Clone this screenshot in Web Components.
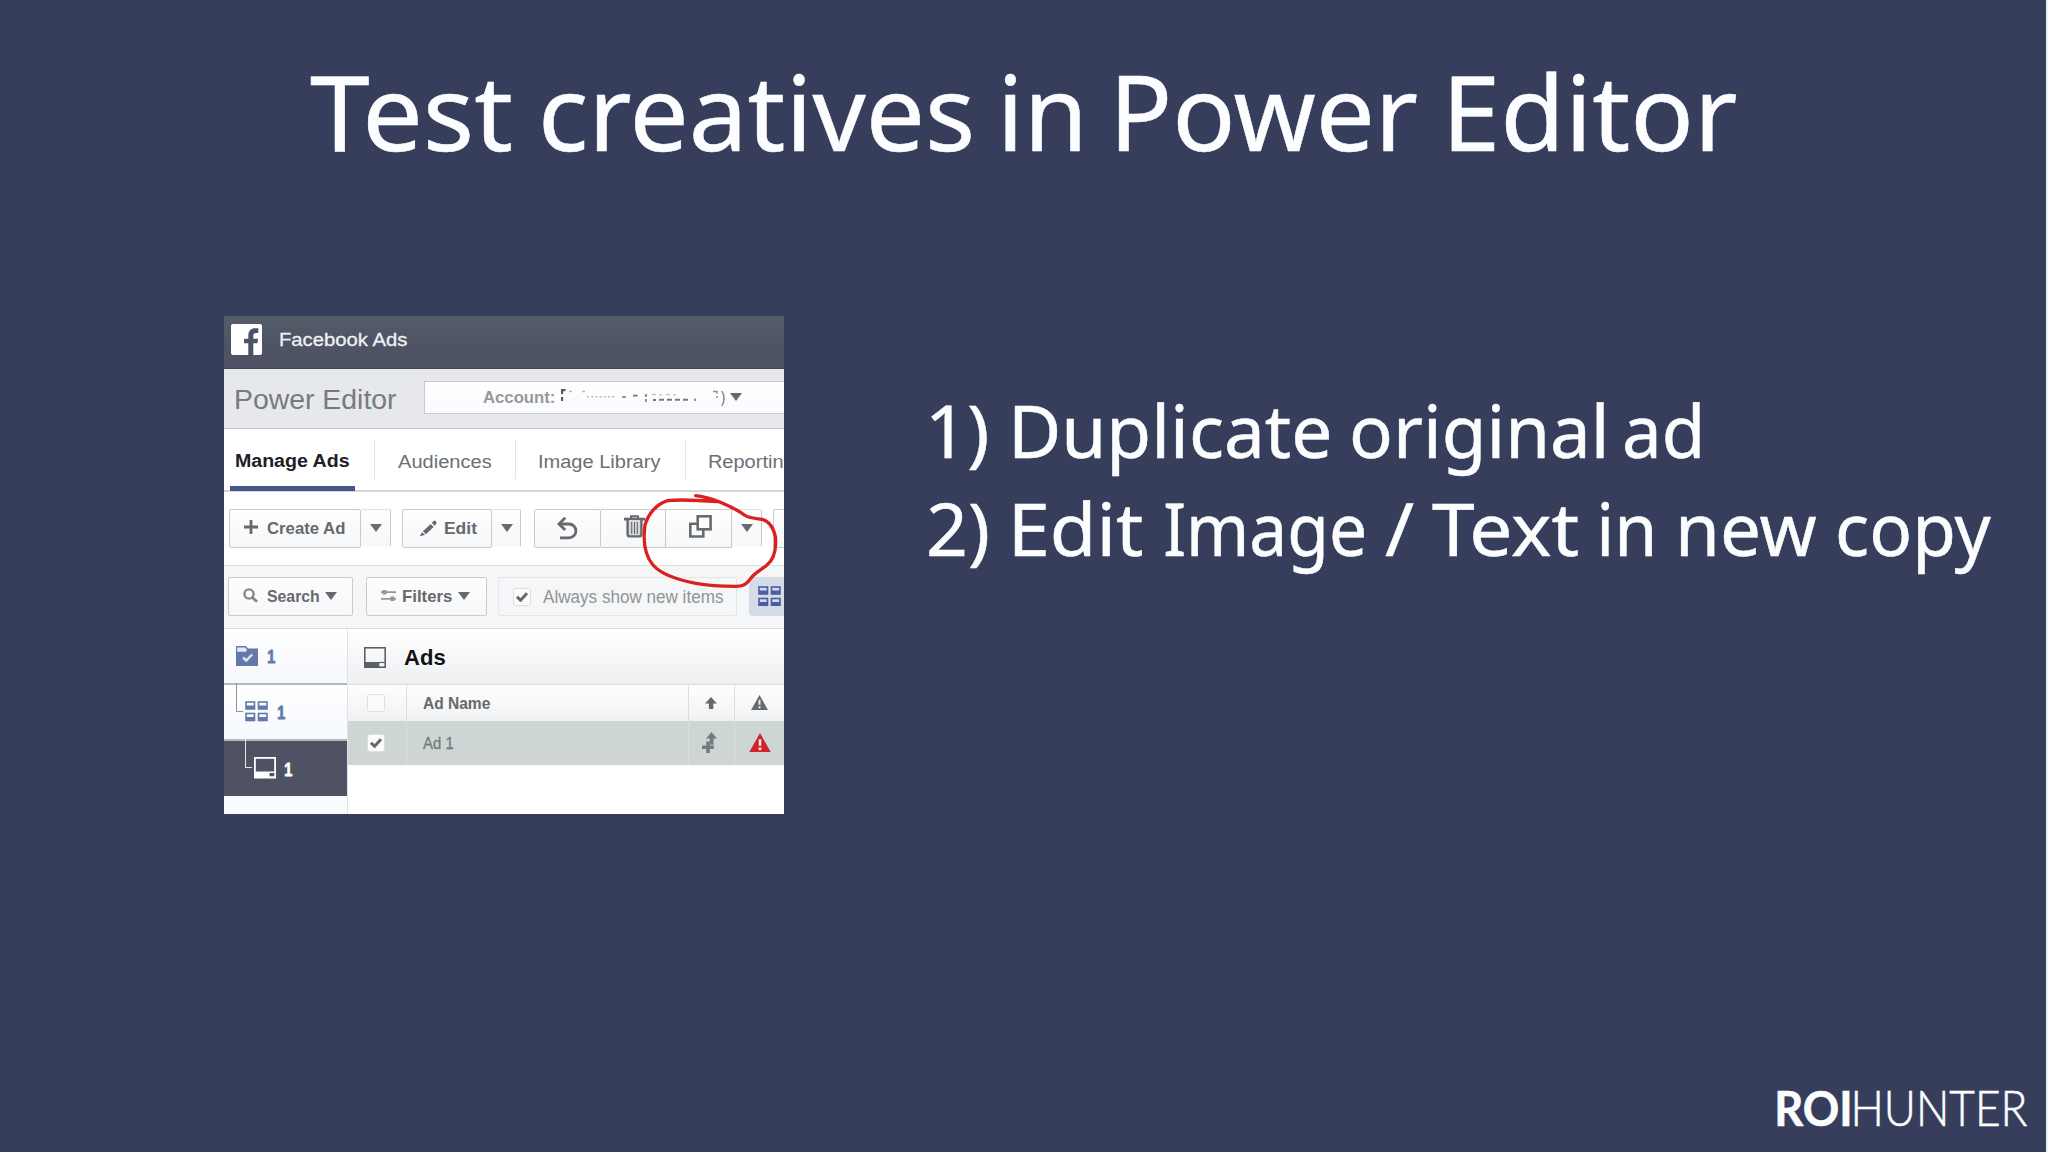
<!DOCTYPE html>
<html lang="en">
<head>
<meta charset="utf-8">
<title>Test creatives in Power Editor</title>
<style>
  body {
    margin: 0;
    background: #373e5c;
    overflow: hidden;
  }
</style>
</head>
<body>
<title-slide>
  <fit-text slot="title" w="200.5">Test</fit-text>
  <fit-text slot="title" w="427.6" style="margin-left:32px">creatives</fit-text>
  <fit-text slot="title" w="74.8" style="margin-left:34px">in</fit-text>
  <fit-text slot="title" w="298.2" style="margin-left:40.1px">Power</fit-text>
  <fit-text slot="title" w="284.6" style="margin-left:34.5px">Editor</fit-text>

  <power-editor slot="figure"></power-editor>

  <slide-step slot="steps">
    <fit-text w="55.4" style="margin-left:2.4px">1)</fit-text>
    <fit-text w="314.3" style="margin-left:28.2px">Duplicate</fit-text>
    <fit-text w="250.8" style="margin-left:23.9px">original</fit-text>
    <fit-text w="74.8" style="margin-left:21.4px">ad</fit-text>
  </slide-step>
  <slide-step slot="steps">
    <fit-text w="58">2)</fit-text>
    <fit-text w="127" style="margin-left:28px">Edit</fit-text>
    <fit-text w="199.3" style="margin-left:23px">Image</fit-text>
    <fit-text w="29" style="margin-left:21px">/</fit-text>
    <fit-text w="145.8" style="margin-left:17.7px">Text</fit-text>
    <fit-text w="51.5" style="margin-left:23.6px">in</fit-text>
    <fit-text w="135.5" style="margin-left:28.1px">new</fit-text>
    <fit-text w="152.6" style="margin-left:22.5px">copy</fit-text>
  </slide-step>

  <roi-logo slot="logo"></roi-logo>
</title-slide>

<script>
class TitleSlide extends HTMLElement {
  constructor() {
    super();
    this.attachShadow({ mode: 'open' });
    this.shadowRoot.innerHTML = `
      <style>
        :host {
          display: flex;
          flex-direction: column;
          box-sizing: border-box;
          width: 2048px;
          height: 1152px;
          background: #373e5c;
          border-right: 2px solid #eef3f8;
          color: #fbfdff;
          font-family: "Noto Sans", "Open Sans", sans-serif;
        }
        .title {
          display: flex;
          height: 74px;
          padding: 75.5px 0 0 310.5px;
          font-size: 103.6px;
          -webkit-text-stroke: .5px;
        }
        .main {
          display: flex;
          flex: 1;
          align-items: flex-start;
          padding: 166px 0 0 223.7px;
        }
        .steps {
          display: flex;
          flex-direction: column;
          gap: 46px;
          margin: 89.5px 0 0 145.3px;
          font-size: 72.8px;
          -webkit-text-stroke: .5px;
        }
        .footer {
          display: flex;
          justify-content: flex-end;
          padding: 0 18.7px 26.3px 0;
        }
      </style>
      <div class="title"><slot name="title"></slot></div>
      <div class="main">
        <slot name="figure"></slot>
        <div class="steps"><slot name="steps"></slot></div>
      </div>
      <div class="footer"><slot name="logo"></slot></div>
    `;
  }
}

class SlideStep extends HTMLElement {
  constructor() {
    super();
    this.attachShadow({ mode: 'open' });
    this.shadowRoot.innerHTML = `
      <style>
        :host { display: flex; height: 52px; }
      </style>
      <slot></slot>
    `;
  }
}

class RoiLogo extends HTMLElement {
  constructor() {
    super();
    this.attachShadow({ mode: 'open' });
    this.shadowRoot.innerHTML = `
      <style>
        :host {
          display: flex;
          gap: 6px;
          font-family: Lato, sans-serif;
          font-size: 48.4px;
          font-weight: 300;
          -webkit-text-stroke: .6px;
        }
        .bold { font-weight: 700; }
      </style>
      <fit-text class="bold" w="72.6">ROI</fit-text>
      <fit-text w="172">HUNTER</fit-text>
    `;
  }
}

// Box as wide as w and as high as a capital; the text is stretched to fill it.
class FitText extends HTMLElement {
  constructor() {
    super();
    this.attachShadow({ mode: 'open' });
  }

  connectedCallback() {
    const cs = getComputedStyle(this);
    const ctx = document.createElement('canvas').getContext('2d');
    ctx.font = `${cs.fontWeight} ${cs.fontSize} ${cs.fontFamily}`;
    const m = ctx.measureText(this.textContent.trim());
    const cap = ctx.measureText('H').actualBoundingBoxAscent;
    const w = Number(this.getAttribute('w'));
    const scale = w / (m.actualBoundingBoxLeft + m.actualBoundingBoxRight);
    const dx = m.actualBoundingBoxLeft * scale;
    const dy = cap / 2 - (m.fontBoundingBoxAscent - m.fontBoundingBoxDescent) / 2;

    this.shadowRoot.innerHTML = `
      <style>
        :host {
          display: block;
          flex: none;
          width: ${w}px;
          height: ${cap}px;
          line-height: ${cap}px;
          white-space: nowrap;
        }
        span {
          display: inline-block;
          vertical-align: top;
          transform-origin: 0 0;
          transform: translate(${dx}px, ${dy}px) scaleX(${scale});
        }
      </style>
      <span><slot></slot></span>
    `;
  }
}

const GRID = `
  <rect x="1" y="1" width="8.5" height="7"/><rect x="13.5" y="1" width="8.5" height="7"/>
  <rect x="1" y="12.5" width="8.5" height="7"/><rect x="13.5" y="12.5" width="8.5" height="7"/>
  <path d="M1 6.3h8.5M13.5 6.3h8.5M1 17.8h8.5M13.5 17.8h8.5" stroke-width="3.4"/>`;

const ICONS = {
  facebook: [31, 31, `<rect width="31" height="31" rx="2" fill="#fff"/>
    <path d="M17.3 31V19.3h-4.2v-4.6h4.2v-3.2c0-5 2.8-7.2 7-7.2h3v4.6h-2.2c-2.1 0-2.8 1-2.8 2.9v2.9h4.8l-.6 4.6h-4.2V31z" fill="#4b5366"/>`],
  caret: [12, 8, '<path d="M0 0h12L6 8z" fill="currentColor"/>'],
  plus: [14, 14, '<path d="M7 0v14M0 7h14" stroke="currentColor" stroke-width="2.8"/>'],
  pencil: [18, 17, `<path d="M3.9 11.2 11.6 3.9l3 3-7.7 7.3z" fill="currentColor"/>
    <path d="m12.7 2.8 1.9-1.9q1-.7 2 .2l.7.8q.7 1-.1 1.8l-1.6 2z" fill="currentColor"/><path d="m3 12.2 3 2.8-5.2 1.3z" fill="currentColor"/>`],
  undo: [21, 23, `<path d="M2 7h10a6.8 6.8 0 0 1 0 13.8H3" fill="none" stroke="currentColor" stroke-width="2.8"/>
    <path d="M8.2.8 2 7l6.2 6" fill="none" stroke="currentColor" stroke-width="2.8"/>`],
  trash: [21, 23, `<path d="M7 3V1.2h7V3" fill="none" stroke="currentColor" stroke-width="2"/><path d="M0 4.1h21" stroke="currentColor" stroke-width="2.8"/>
    <path d="M3.6 5v14.2q0 2.2 2.2 2.2h9.4q2.2 0 2.2-2.2V5" fill="#d7d9db" stroke="currentColor" stroke-width="2.4"/>
    <path d="M7.7 7v12M10.5 7v12M13.3 7v12" stroke="currentColor" stroke-width="1.1"/>`],
  duplicate: [23, 23, `<path d="M8 8.7H1.3v12.8h13V15" fill="none" stroke="currentColor" stroke-width="2.6"/>
    <rect x="8.7" y="1.3" width="12.9" height="13" fill="none" stroke="currentColor" stroke-width="2.6"/>`],
  search: [15, 15, `<circle cx="6" cy="6" r="4.6" fill="none" stroke="currentColor" stroke-width="2.4"/>
    <path d="m9.4 9.4 4.6 4.4" stroke="currentColor" stroke-width="2.8"/>`],
  filters: [15, 13, `<path d="M0 3.2h15M0 9.8h15" stroke="currentColor" stroke-width="1.7"/>
    <path d="M1.5 3.2h4M9.5 9.8h4" stroke="currentColor" stroke-width="4.4"/>`],
  grid: [23, 20.5, `<g fill="none" stroke="currentColor" stroke-width="1.6">${GRID}</g>`],
  folder: [22, 20, `<path d="M0 0h10l2 2.6h10V20H0z" fill="currentColor"/><path d="M1.2 1.4h8l1.8 2.7-1.3 1.6H1.2z" fill="#e4e9f4"/>
    <path d="m7 11.5 3.2 3 6-6" fill="none" stroke="#dfe6f4" stroke-width="2.4"/>`],
  ad: [22, 21, `<rect x=".8" y=".8" width="20.4" height="19.4" fill="none" stroke="currentColor" stroke-width="1.6"/>
    <path d="M.5 15h14.8v5.5H.5z" fill="currentColor"/><path d="M15 15.5h6.5" stroke="currentColor" stroke-width="1.2"/>`],
  'ad-dark': [22, 21.5, `<rect x=".9" y=".9" width="20.2" height="19.7" fill="none" stroke="currentColor" stroke-width="1.8"/>
    <path d="M.5 14.5h21v6.5H.5z" fill="currentColor"/><path d="M15.5 16h4.8v3.2h-4.8z" fill="#4e5262"/>`],
  up: [12, 12, '<path d="M6 0l6 6.5H8.3V12H3.9V6.5H0z" fill="currentColor"/>'],
  'up-plus': [15, 21.5, `<path d="M9.5 0 15 6.5h-3.4v6.2H7.7V6.5H4z" fill="currentColor"/>
    <path d="M6 9.5v11.8M0 15.3h11.8" stroke="currentColor" stroke-width="3.6"/>`],
  warning: [22, 19.5, `<path d="M11 0l11 19.5H0z" fill="currentColor"/>
    <path d="M11 6.3v6.4M11 14.6v2.7" stroke="#f6ecec" stroke-width="2.5"/>`],
  check: [12, 10, '<path d="m1 4.8 3.6 3.5L11 1.2" fill="none" stroke="#66696b" stroke-width="3"/>'],
  // leftovers of the account name that was wiped out
  smudge: [160, 18, `<g fill="none" stroke="#74777a" stroke-width="1.6">
    <path d="M1 13V9M1 6V2.2h3.5" stroke="#55585a" stroke-width="2.2"/>
    <path d="M8 3.5h3M21 3.5h3" opacity=".5"/><path d="M26 8.8h28" stroke-dasharray="2 2.2" opacity=".5"/>
    <path d="M61 9h4M72 7.6h4.5"/><path d="M85 6v3M85 11v3"/>
    <path d="M91 6.5h4M98 7h3M105 6.5h4M112 7h3" opacity=".4"/>
    <path d="M92 12h3M98 11.7h5M106 11.7h5M114 11.7h5M122 11.7h5" stroke-width="2"/><path d="M134 10.5v2.5"/>
    <path d="M152 3.5h4v2M156 8v2" opacity=".8"/></g>`]
};

class UiIcon extends HTMLElement {
  constructor() {
    super();
    this.attachShadow({ mode: 'open' });
  }

  connectedCallback() {
    const [w, h, body] = ICONS[this.getAttribute('name')];
    const width = Number(this.getAttribute('w')) || w;
    this.shadowRoot.innerHTML = `
      <style>
        :host { display: block; flex: none; width: ${width}px; height: ${h * width / w}px; }
        svg { display: block; }
      </style>
      <svg width="${width}" height="${h * width / w}" viewBox="0 0 ${w} ${h}">${body}</svg>
    `;
  }
}

class UiButton extends HTMLElement {
  constructor() {
    super();
    this.attachShadow({ mode: 'open' });
    this.shadowRoot.innerHTML = `
      <style>
        :host {
          display: flex;
          flex: none;
          align-items: center;
          box-sizing: border-box;
          height: 39px;
          border: 1.5px solid #c8cacd;
          border-radius: 2px;
          background: linear-gradient(#fefefe, #f6f7f9);
          color: #66696d;
          font-weight: 700;
        }
        :host([joined]) { border-left: 0; border-radius: 0; }
        :host([drop]) {
          height: 38px;
          justify-content: center;
          border-left: 0;
          border-bottom-color: transparent;
          border-top-color: #dfe1e3;
        }
      </style>
      <slot></slot>
    `;
  }
}

class UiCheckbox extends HTMLElement {
  constructor() {
    super();
    this.attachShadow({ mode: 'open' });
  }

  connectedCallback() {
    this.shadowRoot.innerHTML = `
      <style>
        :host {
          display: flex;
          flex: none;
          align-items: center;
          justify-content: center;
          box-sizing: border-box;
          width: 18px;
          height: 18px;
          border: 1.5px solid #dcdee0;
          border-radius: 3px;
          background: #fbfbfc;
        }
      </style>
      ${this.hasAttribute('checked') ? '<ui-icon name="check"></ui-icon>' : ''}
    `;
  }
}

class TreeItem extends HTMLElement {
  constructor() {
    super();
    this.attachShadow({ mode: 'open' });
  }

  connectedCallback() {
    const level = Number(this.getAttribute('level'));
    this.shadowRoot.innerHTML = `
      <style>
        :host {
          display: flex;
          box-sizing: border-box;
          height: 56px;
          align-items: center;
          padding-left: ${12.8 + level * 8.6}px;
          position: relative;
          color: #6478ab;
          font-size: 17.5px;
          font-weight: 700;
          background: linear-gradient(#fff, #f5f8fc);
          border-bottom: 2px solid #b4b8bf;
        }
        :host([active]) { height: 55px; background: #4e5262; color: #fff; border: 0; }
        .branch {
          position: absolute;
          left: ${4.5 + level * 8.2}px;
          top: -2px;
          width: 6px;
          height: 28px;
          border: solid #8d9299;
          border-width: 0 0 1.5px 1.5px;
        }
        :host([active]) .branch { border-color: #e4e7ea; }
        fit-text { margin: 2px 0 0 9.5px; -webkit-text-stroke: .8px; }
      </style>
      ${level ? '<div class="branch"></div>' : ''}
      <ui-icon name="${this.getAttribute('icon')}"></ui-icon>
      <fit-text w="7.4">1</fit-text>
    `;
  }
}

class PowerEditor extends HTMLElement {
  constructor() {
    super();
    this.attachShadow({ mode: 'open' });
    this.shadowRoot.innerHTML = `
      <style>
        :host {
          display: block;
          flex: none;
          position: relative;
          width: 560px;
          height: 498px;
          overflow: hidden;
          background: #fff;
          color: #6b6f76;
          font-family: "Liberation Sans", Arial, sans-serif;
          font-size: 17px;
        }
        .row { display: flex; align-items: center; box-sizing: border-box; overflow: hidden; }
        .brand {
          height: 53px;
          padding: 0 0 4px 7.5px;
          background: linear-gradient(#535d68, #4f5565 45%, #4f5363);
          border-bottom: 1px solid #434754;
          color: #eef1f5;
          font-size: 19px;
          -webkit-text-stroke: .3px;
        }
        .account-bar { height: 60px; padding-left: 12.8px; background: #e6e8ec; border-bottom: 1.5px solid #c3c6cb; }
        .name { font-size: 27.5px; color: #777b80; }
        .account {
          display: flex;
          flex: none;
          align-items: center;
          box-sizing: border-box;
          width: 380px;
          height: 33px;
          margin: -2px 0 0 27.3px;
          padding-left: 57.5px;
          border: 1.5px solid #c8cbd0;
          background: linear-gradient(#fff, #f9fafc);
          font-size: 16px;
          color: #66696d;
        }
        .tabs { height: 63px; padding-left: 6.5px; border-bottom: 2px solid #d5d6d8; font-size: 18px; overflow: visible; position: relative; }
        .tab-active {
          display: flex;
          align-items: center;
          align-self: flex-end;
          box-sizing: border-box;
          width: 125.3px;
          height: 62px;
          padding: 6px 0 0 6px;
          margin: 0 18.5px -1px 0;
          border-bottom: 5px solid #435589;
          color: #1e2026;
          font-weight: 700;
        }
        .sep { flex: none; width: 1px; height: 39px; background: #e3e5e8; }
        .tools { height: 74px; padding-left: 5.3px; border-bottom: 1.5px solid #dcdee0; }
        .filters { height: 63px; padding: 0 0 1px 4.3px; background: #f5f6f8; border-bottom: 1.5px solid #dadcdf; }
        .always { background: none; border-color: #e3e5e8; font-weight: 400; color: #8f9497; }
        .view { width: 60px; background: #d6dbe8; border-color: #d6dbe8; color: #4a5da0; border-radius: 4px; }
        .body { display: grid; grid-template-columns: 123px 1fr; height: 185px; }
        .tree { background: #fafcff; }
        .list { border-left: 1.5px solid #dfe1e4; }
        .list-title { height: 56px; padding-left: 16.5px; background: linear-gradient(#fff, #eeeff1); border-bottom: 1.5px solid #dcdee0; font-size: 22px; font-weight: 700; color: #111216; }
        .line { display: grid; grid-template-columns: 58px 282px 46px 1fr; }
        .cell { display: flex; align-items: center; border-left: 1.5px solid #dbdddf; box-sizing: border-box; padding-left: 16px; }
        .cell:first-child { border: 0; padding-left: 19px; }
        .head { height: 36px; background: linear-gradient(#fff, #f0f1f3); font-size: 16px; font-weight: 700; color: #66696d; }
        .item { height: 44px; background: #ced6d5; font-size: 16px; color: #737b7c; -webkit-text-stroke: .3px; }
        .item .cell { border-color: #d8dfde; }
        .marker { position: absolute; left: 0; top: 0; }
      </style>

      <div class="row brand">
        <ui-icon name="facebook"></ui-icon>
        <fit-text w="128" style="margin-left:18px">Facebook Ads</fit-text>
      </div>

      <div class="row account-bar">
        <fit-text class="name" w="160.4" style="margin-top:3px">Power Editor</fit-text>
        <div class="account">
          <fit-text w="71" style="font-weight:700;color:#96999b">Account:</fit-text>
          <ui-icon name="smudge" style="margin-left:7px"></ui-icon>
          <fit-text w="4">)</fit-text>
          <ui-icon name="caret" style="margin-left:5px"></ui-icon>
        </div>
      </div>

      <div class="row tabs">
        <div class="tab-active"><fit-text w="114.3">Manage Ads</fit-text></div>
        <div class="sep"></div>
        <fit-text w="93.7" style="margin:4px 23px 0">Audiences</fit-text>
        <div class="sep"></div>
        <fit-text w="121.4" style="margin:4px 24.3px 0 23.8px">Image Library</fit-text>
        <div class="sep"></div>
        <fit-text w="73.4" style="margin:4px 0 0 22.5px">Reportin</fit-text>
      </div>

      <div class="row tools">
        <ui-button style="width:132.4px">
          <ui-icon name="plus" style="margin:-3px 9px 0 14.5px"></ui-icon>
          <fit-text w="78.6">Create Ad</fit-text>
        </ui-button>
        <ui-button drop style="width:29.6px"><ui-icon name="caret"></ui-icon></ui-button>
        <ui-button style="width:90px;margin-left:11px">
          <ui-icon name="pencil" style="margin:0 8.5px 0 15.7px"></ui-icon>
          <fit-text w="32.3">Edit</fit-text>
        </ui-button>
        <ui-button drop style="width:29.4px;padding-left:2px"><ui-icon name="caret"></ui-icon></ui-button>
        <ui-button style="width:67px;margin-left:12.4px;padding-left:22.5px"><ui-icon name="undo"></ui-icon></ui-button>
        <ui-button joined style="width:65.3px;padding-left:23px"><ui-icon name="trash" style="margin-top:-3px"></ui-icon></ui-button>
        <ui-button joined style="width:66.4px;padding-left:23px"><ui-icon name="duplicate" style="margin-top:-3px"></ui-icon></ui-button>
        <ui-button drop style="width:29.5px"><ui-icon name="caret"></ui-icon></ui-button>
        <ui-button style="width:40px;margin-left:11.5px"></ui-button>
      </div>

      <div class="row filters">
        <ui-button style="width:125.4px">
          <ui-icon name="search" style="margin:-2px 9px 0 14px;color:#85888b"></ui-icon>
          <fit-text w="52.4">Search</fit-text>
          <ui-icon name="caret" style="margin-left:5.5px"></ui-icon>
        </ui-button>
        <ui-button style="width:121px;margin-left:12.6px">
          <ui-icon name="filters" style="margin:-2px 6.7px 0 14.5px;color:#94979a"></ui-icon>
          <fit-text w="49">Filters</fit-text>
          <ui-icon name="caret" style="margin-left:6.3px"></ui-icon>
        </ui-button>
        <ui-button class="always" style="width:239px;margin-left:11px">
          <ui-checkbox checked style="margin:1px 12.3px 0 14.2px"></ui-checkbox>
          <fit-text w="180.7" style="font-size:17.5px;margin-top:1px">Always show new items</fit-text>
        </ui-button>
        <ui-button class="view" style="margin-left:11.7px"><ui-icon name="grid" style="margin-left:8.5px"></ui-icon></ui-button>
      </div>

      <div class="body">
        <div class="tree">
          <tree-item level="0" icon="folder"></tree-item>
          <tree-item level="1" icon="grid"></tree-item>
          <tree-item level="2" icon="ad-dark" active></tree-item>
        </div>
        <div class="list">
          <div class="row list-title">
            <ui-icon name="ad" style="color:#5b5f68;margin-top:3px"></ui-icon>
            <fit-text w="41.4" style="margin:2px 0 0 17.6px">Ads</fit-text>
          </div>
          <div class="line head">
            <div class="cell"><ui-checkbox></ui-checkbox></div>
            <div class="cell"><fit-text w="67.4">Ad Name</fit-text></div>
            <div class="cell"><ui-icon name="up"></ui-icon></div>
            <div class="cell"><ui-icon name="warning" w="17"></ui-icon></div>
          </div>
          <div class="line item">
            <div class="cell"><ui-checkbox checked></ui-checkbox></div>
            <div class="cell"><fit-text w="30.8">Ad 1</fit-text></div>
            <div class="cell" style="padding-left:13.5px"><ui-icon name="up-plus"></ui-icon></div>
            <div class="cell" style="padding-left:14px"><ui-icon name="warning" style="color:#d3232a"></ui-icon></div>
          </div>
        </div>
      </div>

      <svg class="marker" width="560" height="498" viewBox="0 0 1680 1494">
        <path transform="translate(813 507)" fill="none" stroke="#dc2020" stroke-width="10" stroke-linecap="round" stroke-linejoin="round"
          d="M602 32C632 35 650 42 674 51C700 62 728 74 748 90C762 100 785 101 802 103C826 110 836 130 841 155C845 195 838 222 815 241C795 256 776 266 764 284C752 300 742 304 722 304C680 304 640 302 603 295C550 285 500 270 474 240C448 210 444 165 450 120C462 80 490 55 518 47C560 42 615 46 672 50"/>
      </svg>
    `;
  }
}

customElements.define('title-slide', TitleSlide);
customElements.define('slide-step', SlideStep);
customElements.define('roi-logo', RoiLogo);
customElements.define('power-editor', PowerEditor);
customElements.define('ui-button', UiButton);
customElements.define('ui-checkbox', UiCheckbox);
customElements.define('tree-item', TreeItem);
customElements.define('ui-icon', UiIcon);
// last, so that the font it measures is already inherited
customElements.define('fit-text', FitText);
</script>
</body>
</html>
